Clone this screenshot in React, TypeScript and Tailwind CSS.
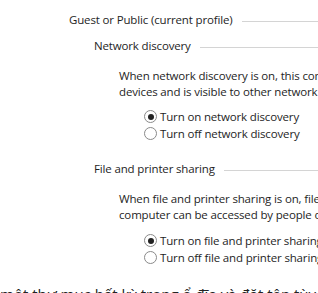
import React from "react";

const font = { fontFamily: '"Open Sans", "Noto Sans", sans-serif' };

function Radio({ checked, label }: { checked?: boolean; label: string }) {
    return (
        <div className="flex items-center h-[17px]">
            <span className="shrink-0 w-[13px] h-[13px] rounded-full border border-[#8a8a8a] bg-white flex items-center justify-center mr-[3px]">
                {checked && <span className="w-[6px] h-[6px] rounded-full bg-[#222]" />}
            </span>
            <span className="whitespace-nowrap">{label}</span>
        </div>
    );
}

function Heading({ label }: { label: string }) {
    return (
        <div className="flex items-center h-[16px]">
            <span className="whitespace-nowrap">{label}</span>
            <span className="flex-1 h-px bg-[#d4d4d4] ml-[9px] mt-[2px]" />
        </div>
    );
}

export default function App() {
    return (
        <div className="w-[318px] h-[293px] overflow-hidden bg-white text-[11.5px] tracking-[-0.15px] leading-[16px] text-[#1e1e1e]" style={font}>
            <div className="pl-[69px] pt-[12px]">
                <Heading label="Guest or Public (current profile)" />
                <div className="pl-[25px] mt-[10px]">
                    <Heading label="Network discovery" />
                    <div className="pl-[25px] mt-[14px] whitespace-nowrap">
                        <div>When network discovery is on, this computer can see other network</div>
                        <div>devices and is visible to other network computers.</div>
                    </div>
                    <div className="pl-[50px] mt-[8px]">
                        <Radio checked label="Turn on network discovery" />
                        <Radio label="Turn off network discovery" />
                    </div>
                </div>
                <div className="pl-[25px] mt-[19px]">
                    <Heading label="File and printer sharing" />
                    <div className="pl-[25px] mt-[14px] whitespace-nowrap">
                        <div>When file and printer sharing is on, files and printers on this</div>
                        <div>computer can be accessed by people on the network.</div>
                    </div>
                    <div className="pl-[50px] mt-[9px]">
                        <Radio checked label="Turn on file and printer sharing" />
                        <Radio label="Turn off file and printer sharing" />
                    </div>
                </div>
            </div>
            <div className="mt-[18px] text-[15px] tracking-normal leading-[20px] text-[#222] whitespace-nowrap">
                một thư mục bất kỳ trong ổ đĩa và đặt tên tùy ý
            </div>
        </div>
    );
}
